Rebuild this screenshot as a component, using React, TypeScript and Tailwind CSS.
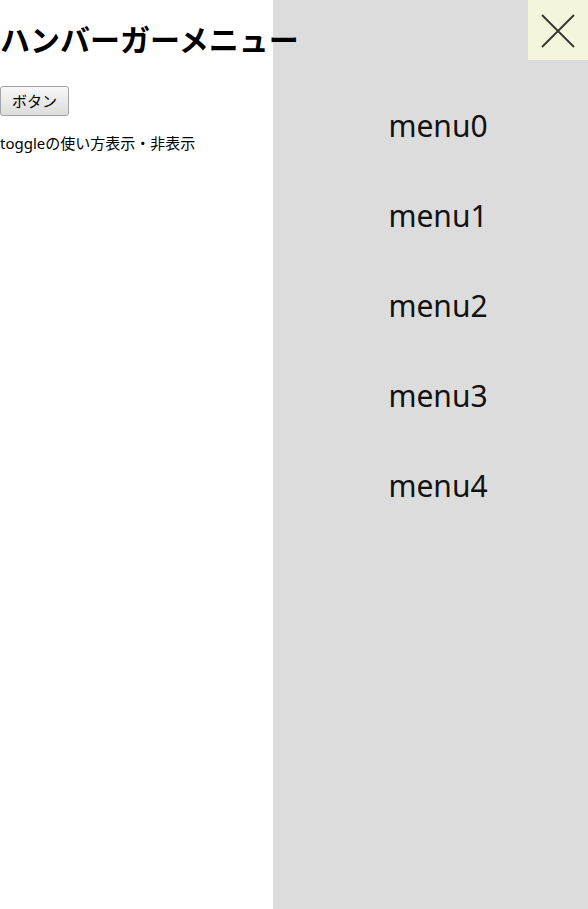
import React, { useState } from 'react';

const menuItems = ['menu0', 'menu1', 'menu2', 'menu3', 'menu4'];

const App: React.FC = () => {
  const [open, setOpen] = useState(true);

  return (
    <div
      className="relative min-h-screen bg-white text-black"
      style={{ fontFamily: '"Noto Sans", "Noto Sans CJK JP", sans-serif' }}
    >
      <h1 className="relative z-10 m-0 pt-[21px] text-[30px] leading-[37px] font-bold whitespace-nowrap">
        ハンバーガーメニュー
      </h1>

      <button
        type="button"
        onClick={() => setOpen(!open)}
        className="mt-[28px] flex h-[30px] w-[69px] items-center justify-center rounded-[3px] border border-[#a3a3a3] bg-gradient-to-b from-[#f8f8f8] to-[#dcdcdc] text-[15px] leading-none text-black"
      >
        ボタン
      </button>

      <p className="mt-[17px] text-[15px] leading-[20px]">toggleの使い方表示・非表示</p>

      {open && (
        <nav className="absolute top-0 right-0 h-full w-[315px] bg-[#dcdcdc]">
          <button
            type="button"
            onClick={() => setOpen(false)}
            className="absolute top-0 right-0 flex h-[60px] w-[60px] items-center justify-center bg-[#f5f5dc]"
            aria-label="close"
          >
            <svg width="60" height="60" viewBox="0 0 60 60">
              <path d="M14 15 L46 47 M46 15 L14 47" stroke="#333" strokeWidth="1.8" fill="none" />
            </svg>
          </button>

          <ul className="mt-[80px] pl-[15px]">
            {menuItems.map((item) => (
              <li key={item} className="flex h-[90px] items-center justify-center text-[30px] text-[#111]">
                {item}
              </li>
            ))}
          </ul>
        </nav>
      )}
    </div>
  );
};

export default App;
